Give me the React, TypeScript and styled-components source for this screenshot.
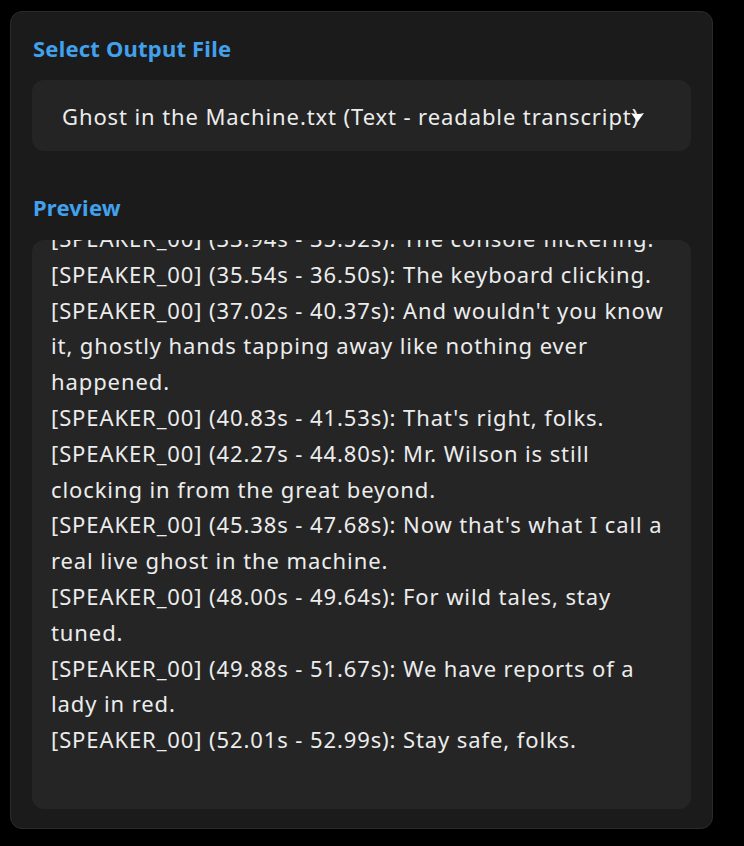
import React from 'react'
import styled, { createGlobalStyle } from 'styled-components'

// =============================================================================
// DATA
// =============================================================================

const outputFile = 'Ghost in the Machine.txt (Text - readable transcript)'

const transcript = [
  '[SPEAKER_00] (33.94s - 35.52s): The console flickering.',
  '[SPEAKER_00] (35.54s - 36.50s): The keyboard clicking.',
  "[SPEAKER_00] (37.02s - 40.37s): And wouldn't you know it, ghostly hands tapping away like nothing ever happened.",
  "[SPEAKER_00] (40.83s - 41.53s): That's right, folks.",
  '[SPEAKER_00] (42.27s - 44.80s): Mr. Wilson is still clocking in from the great beyond.',
  "[SPEAKER_00] (45.38s - 47.68s): Now that's what I call a real live ghost in the machine.",
  '[SPEAKER_00] (48.00s - 49.64s): For wild tales, stay tuned.',
  '[SPEAKER_00] (49.88s - 51.67s): We have reports of a lady in red.',
  '[SPEAKER_00] (52.01s - 52.99s): Stay safe, folks.',
]

// =============================================================================
// STYLES
// =============================================================================

const GlobalStyle = createGlobalStyle`
  html, body {
    margin: 0;
    padding: 0;
    background: #000000;
  }
  body {
    font-family: 'Noto Sans', 'Open Sans', sans-serif;
    color: #e6e6e6;
  }
`

const Page = styled.div`
  padding: 11px 31px 17px 10px;
`

const Card = styled.section`
  display: flex;
  flex-direction: column;
  background: #1b1b1b;
  border: 1px solid #2b2b2b;
  border-radius: 12px;
  padding: 22px 21px 19px 21px;
`

const SectionLabel = styled.h2<{ $gap?: number }>`
  margin: 0 0 ${({ $gap = 18 }) => $gap}px 1px;
  font-size: 22px;
  line-height: 28px;
  font-weight: 700;
  letter-spacing: 0.2px;
  color: #42a1ec;
`

const SelectBox = styled.div`
  position: relative;
  display: flex;
  align-items: center;
  height: 71px;
  padding: 0 40px 0 30px;
  background: #242424;
  border-radius: 12px;
  margin-bottom: 42px;
  cursor: pointer;
`

const SelectValue = styled.span`
  font-size: 22px;
  letter-spacing: 0.9px;
  color: #ececec;
  white-space: nowrap;
`

const Caret = styled.svg`
  position: absolute;
  right: 47px;
  top: 33px;
  width: 13px;
  height: 9px;
`

const PreviewBox = styled.div`
  height: 569px;
  overflow: hidden;
  background: #252525;
  border-radius: 12px;
  padding: 0 19px;
`

const Transcript = styled.div`
  margin-top: -19px;
  font-size: 22px;
  line-height: 35.8px;
  letter-spacing: 0.9px;
  color: #ececec;
`

const Line = styled.p`
  margin: 0;
`

// =============================================================================
// APP
// =============================================================================

export default function App() {
  return (
    <>
      <GlobalStyle />
      <Page>
        <Card>
          <SectionLabel $gap={18}>Select Output File</SectionLabel>
          <SelectBox>
            <SelectValue>{outputFile}</SelectValue>
            <Caret viewBox="0 0 13 9">
              <path d="M0 0 Q6.5 2 13 0 L6.5 9 Z" fill="#ffffff" />
            </Caret>
          </SelectBox>
          <SectionLabel $gap={19}>Preview</SectionLabel>
          <PreviewBox>
            <Transcript>
              {transcript.map((line) => (
                <Line key={line}>{line}</Line>
              ))}
            </Transcript>
          </PreviewBox>
        </Card>
      </Page>
    </>
  )
}
